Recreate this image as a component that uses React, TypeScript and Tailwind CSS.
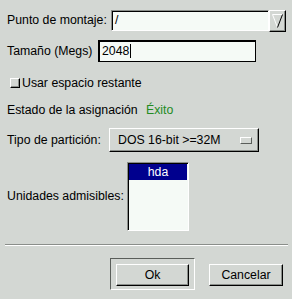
const font = { fontFamily: '"Liberation Sans", Arial, sans-serif' };

function Raised({ className, children }: { className: string; children?: React.ReactNode }) {
  return (
    <div
      className={`flex items-center justify-center border border-t-white border-l-white border-b-black border-r-black shadow-[inset_-1px_-1px_0_#8a8e8a] ${className}`}
    >
      {children}
    </div>
  );
}

export default function App() {
  return (
    <div className="w-[292px] h-[299px] bg-[#d3d7d3] text-[12.3px] text-black pt-[10px] overflow-hidden" style={font}>
      {/* Punto de montaje */}
      <div className="flex h-[22px]">
        <div className="w-[111px] pl-[7px] leading-[21px] whitespace-nowrap">Punto de montaje:</div>
        <div className="w-[158px] h-[21px] bg-[#f5faf6] border border-t-[#8a8e8a] border-l-[#8a8e8a] border-b-white border-r-white shadow-[inset_1px_1px_0_#000] pl-[3px] leading-[19px]">
          /
        </div>
        <Raised className="w-[17px] h-[22px]">
          <svg width="13" height="16" viewBox="0 0 13 16">
            <path d="M1.5 1.5 H11.5" stroke="#fff" strokeWidth="1" />
            <path d="M1.5 1.5 L6.5 14.5" stroke="#fff" strokeWidth="1" />
            <path d="M11.5 1.5 L6.5 14.5" stroke="#000" strokeWidth="1" />
          </svg>
        </Raised>
      </div>

      {/* Tamaño */}
      <div className="flex h-[22px] mt-[8px]">
        <div className="w-[98px] pl-[7px] leading-[22px] whitespace-nowrap">Tamaño (Megs)</div>
        <div className="w-[158px] h-[22px] bg-[#f5faf6] border border-black shadow-[inset_1px_1px_0_#000] pl-[3px] leading-[20px] flex items-center">
          <span>2048</span>
          <span className="inline-block w-px h-[14px] bg-black ml-px" />
        </div>
      </div>

      {/* Usar espacio restante */}
      <div className="flex items-center h-[16px] mt-[13px] pl-[10px]">
        <div className="w-[10px] h-[10px] border border-t-white border-l-white border-b-black border-r-black shadow-[inset_-1px_-1px_0_#8a8e8a]" />
        <span className="ml-[2px] whitespace-nowrap">Usar espacio restante</span>
      </div>

      {/* Estado */}
      <div className="flex items-center h-[16px] mt-[11px] pl-[7px] whitespace-nowrap">
        <span className="w-[139px]">Estado de la asignación</span>
        <span className="text-[#238b23]">Éxito</span>
      </div>

      {/* Tipo de partición */}
      <div className="flex items-center h-[24px] mt-[10px]">
        <div className="w-[109px] pl-[7px] whitespace-nowrap">Tipo de partición:</div>
        <Raised className="w-[150px] h-[24px] !justify-start pl-[8px]">
          <span className="w-[122px] whitespace-nowrap">DOS 16-bit &gt;=32M</span>
          <div className="w-[12px] h-[7px] border border-t-white border-l-white border-b-[#5a5e5a] border-r-[#5a5e5a]" />
        </Raised>
      </div>

      {/* Unidades admisibles */}
      <div className="flex items-center h-[69px] mt-[10px]">
        <div className="w-[127px] pl-[7px] whitespace-nowrap">Unidades admisibles:</div>
        <div className="w-[62px] h-[69px] bg-[#f5faf6] border border-t-[#8a8e8a] border-l-[#8a8e8a] border-b-white border-r-white shadow-[inset_1px_1px_0_#000] pt-[1px] pl-[1px]">
          <div className="h-[16px] w-[58px] bg-[#00008e] text-white text-center leading-[16px]">hda</div>
        </div>
      </div>

      {/* Separator */}
      <div className="mt-[13px] ml-[5px] w-[283px] border-t border-t-[#8a8e8a] border-b border-b-white" />

      {/* Buttons */}
      <div className="flex mt-[12px]">
        <div className="ml-[110px] w-[85px] h-[32px] border border-t-[#5a5e5a] border-l-[#5a5e5a] border-b-white border-r-white pl-[5px] pt-[5px]">
          <Raised className="w-[73px] h-[22px]">Ok</Raised>
        </div>
        <Raised className="ml-[14px] mt-[6px] w-[74px] h-[22px]">Cancelar</Raised>
      </div>
    </div>
  );
}
